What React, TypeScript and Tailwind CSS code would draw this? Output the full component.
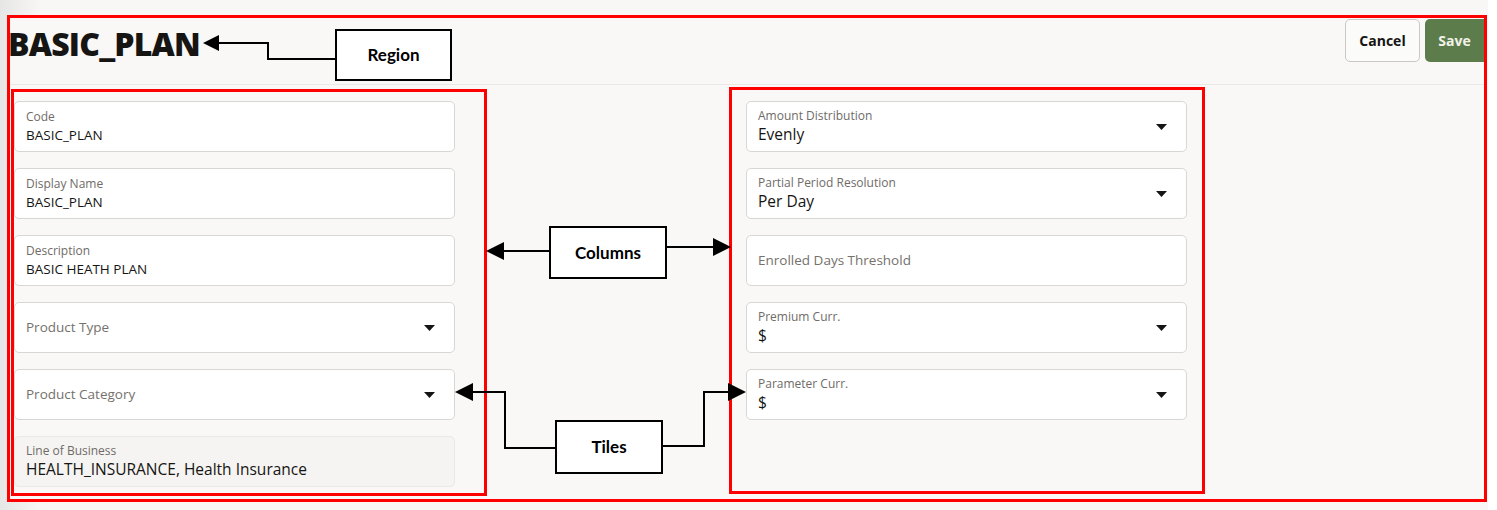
import React from "react";

const font = { fontFamily: '"Open Sans", "Noto Sans", sans-serif' };

function Caret() {
  return (
    <svg width="11" height="6" viewBox="0 0 11 6" className="shrink-0">
      <path d="M0 0 H11 L5.5 6 Z" fill="#161513" />
    </svg>
  );
}

type TileProps = {
  label: string;
  value?: string;
  big?: boolean;
  select?: boolean;
  readOnly?: boolean;
};

function Tile({ label, value, big, select, readOnly }: TileProps) {
  const box = readOnly
    ? "border-[#ebe9e6] bg-[#f5f4f2]"
    : "border-[#d9d7d3] bg-white";

  if (!value) {
    return (
      <div className={`flex h-[51px] items-center justify-between rounded-[5px] border pl-[11px] pr-[19px] ${box}`}>
        <span className="text-[13.5px] text-[#75716c]">{label}</span>
        {select && <Caret />}
      </div>
    );
  }

  return (
    <div className={`flex h-[51px] items-center justify-between rounded-[5px] border pl-[11px] pr-[19px] ${box}`}>
      <div className="flex flex-col">
        <span className="text-[12px] leading-[16px] text-[#6f6b67]">{label}</span>
        <span
          className={
            big
              ? "text-[15.5px] leading-[21px] text-[#161513]"
              : "text-[13.5px] leading-[20px] text-[#161513]"
          }
        >
          {value}
        </span>
      </div>
      {select && <Caret />}
    </div>
  );
}

function Callout({ text, className }: { text: string; className: string }) {
  return (
    <div
      className={`absolute flex items-center justify-center border-2 border-black bg-white text-[17px] font-bold text-black ${className}`}
      style={{ fontFamily: 'Lato, "Open Sans", sans-serif' }}
    >
      {text}
    </div>
  );
}

export default function App() {
  return (
    <div className="relative h-[510px] w-[1497px] overflow-hidden bg-white" style={font}>
      <div className="h-[510px] w-[1488px] bg-[linear-gradient(to_right,#e6e6e6_0px,#f8f7f5_42px)] pt-[15px] pl-[7px]">
        {/* region */}
        <div className="flex h-[487px] w-[1480px] flex-col border-[3px] border-[#ff0000] bg-[#f9f8f6]">
          <div className="flex h-[67px] shrink-0 items-start justify-between border-b border-[#ebe9e6]">
            <h1 className="-ml-[2px] mt-[10px] text-[32px] font-extrabold leading-none tracking-[-0.8px] text-[#161513]">
              BASIC_PLAN
            </h1>
            <div className="mt-[1px] flex gap-[5px]">
              <button className="h-[43px] w-[75px] rounded-[5px] border border-[#cbc9c5] bg-[#fbfbfa] text-[14px] font-bold text-[#161513]">
                Cancel
              </button>
              <button className="h-[43px] w-[59px] rounded-l-[5px] bg-[#5c7c4b] text-[14px] font-bold text-[#f2f2ea]">
                Save
              </button>
            </div>
          </div>

          <div className="flex pl-[1px]">
            {/* left column */}
            <div className="mt-[4px] flex h-[407px] w-[476px] flex-col gap-[16px] border-[3px] border-[#ff0000] pt-[9px] pr-[29px]">
              <Tile label="Code" value="BASIC_PLAN" />
              <Tile label="Display Name" value="BASIC_PLAN" />
              <Tile label="Description" value="BASIC HEATH PLAN" />
              <Tile label="Product Type" select />
              <Tile label="Product Category" select />
              <Tile label="Line of Business" value="HEALTH_INSURANCE, Health Insurance" big readOnly />
            </div>

            {/* right column */}
            <div className="ml-[242px] mt-[2px] flex h-[407px] w-[476px] flex-col gap-[16px] border-[3px] border-[#ff0000] pt-[11px] pl-[14px] pr-[15px]">
              <Tile label="Amount Distribution" value="Evenly" big select />
              <Tile label="Partial Period Resolution" value="Per Day" big select />
              <Tile label="Enrolled Days Threshold" />
              <Tile label="Premium Curr." value="$" big select />
              <Tile label="Parameter Curr." value="$" big select />
            </div>
          </div>
        </div>
      </div>

      {/* annotations */}
      <svg className="pointer-events-none absolute left-0 top-0" width="1497" height="510">
        <g stroke="#000" strokeWidth="2" fill="none">
          <path d="M218 43 H268 V59 H336" />
          <path d="M503 251 H550" />
          <path d="M666 247 H714" />
          <path d="M472 392 H505 V448 H556" />
          <path d="M662 446 H704 V392 H729" />
        </g>
        <g fill="#000">
          <polygon points="203,43 219,35 219,51" />
          <polygon points="486,251 504,242 504,260" />
          <polygon points="731,247 713,238 713,256" />
          <polygon points="455,392 473,383 473,401" />
          <polygon points="746,392 728,383 728,401" />
        </g>
      </svg>
      <Callout text="Region" className="left-[335px] top-[29px] h-[52px] w-[117px]" />
      <Callout text="Columns" className="left-[549px] top-[226px] h-[53px] w-[118px]" />
      <Callout text="Tiles" className="left-[555px] top-[420px] h-[54px] w-[108px]" />
    </div>
  );
}
